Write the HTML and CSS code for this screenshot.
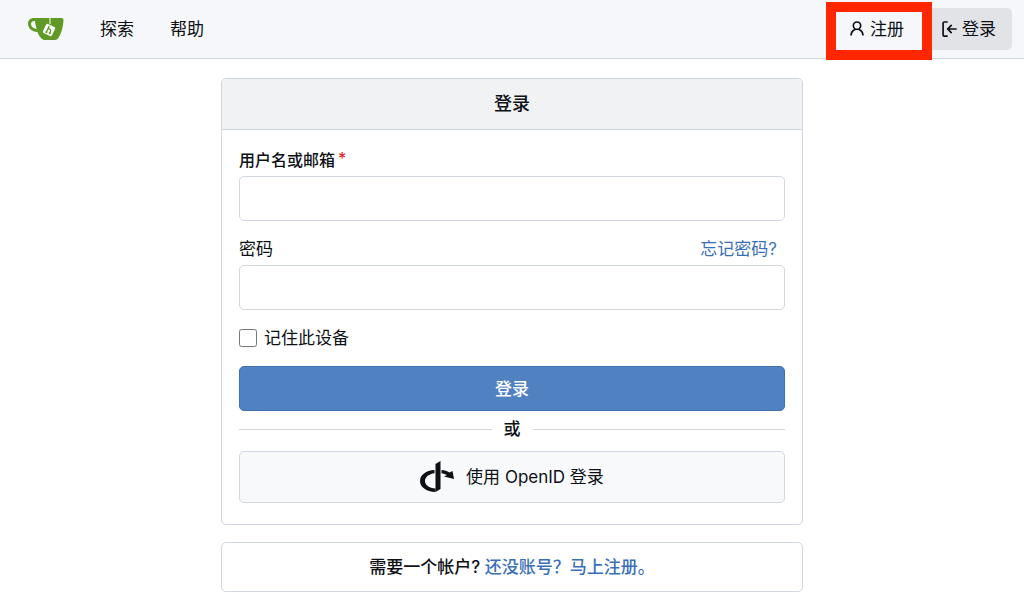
FILE: index.html
```html
<!DOCTYPE html>
<html lang="zh-CN">
  <head>
    <meta charset="UTF-8" />
    <meta name="viewport" content="width=device-width, initial-scale=1.0" />
    <title>登录</title>
    <link rel="stylesheet" href="styles.css">
  </head>
  <body>
    <nav class="navbar">
      <a class="logo" href="#" aria-label="Gitea">
        <svg width="36" height="24" viewBox="0 0 36 24">
          <path fill="#609926" fill-rule="evenodd" d="M6 1C2 1 0 3.500 0 6.500C0 11.500 4 14.500 9.500 15C10.500 18.500 13 21.500 15 22.500Q15.500 23 17 23H27Q28.500 23 29.500 22C33 18 35 11 35.500 3Q35.500 1 33.500 1ZM6.500 4H7C7.300 7 8 10 8.800 12C5 11.300 3 9.500 3 7C3 5 4.500 4 6.500 4Z" />
          <path fill="none" stroke="#fff" stroke-width="1" d="M22 1V7" />
          <rect x="16" y="8" width="10" height="10" rx="1.500" fill="#fff" transform="rotate(26 21 13)" />
          <g transform="rotate(26 21 13)" fill="none" stroke="#609926" stroke-width="1.300">
            <path d="M19.500 9V16M19.500 12H21.500Q23 12 23 13.500V16" />
          </g>
          <g transform="rotate(26 21 13)" fill="#609926">
            <circle cx="19.500" cy="16" r="1.100" />
            <circle cx="23" cy="15.500" r="1.100" />
          </g>
        </svg>
      </a>
      <a class="item" href="#">探索</a>
      <a class="item" href="#">帮助</a>
      <div class="navbar-right">
        <a class="item highlight" href="#">
          <svg width="18" height="18" viewBox="0 0 16 16" fill="currentColor">
            <path d="M10.561 8.073a6 6 0 0 1 3.432 5.142.75.75 0 1 1-1.498.07 4.500 4.500 0 0 0-8.990 0 .75.75 0 0 1-1.498-.07 6 6 0 0 1 3.431-5.142 3.999 3.999 0 1 1 5.123 0ZM10.500 5a2.500 2.500 0 1 0-5 0 2.500 2.500 0 0 0 5 0Z" />
          </svg>
          注册
        </a>
        <a class="item active" href="#">
          <svg width="18" height="18" viewBox="0 0 16 16" fill="currentColor">
            <path d="M2 2.750C2 1.784 2.784 1 3.750 1h2.500a.75.75 0 0 1 0 1.500h-2.500a.25.25 0 0 0-.25.250v10.500c0 .138.112.250.250.250h2.500a.75.75 0 0 1 0 1.500h-2.500A1.750 1.750 0 0 1 2 13.250Zm6.560 4.500h5.690a.75.75 0 0 1 0 1.500H8.560l1.970 1.970a.749.749 0 0 1-1.060 1.060L6.220 8.530a.75.75 0 0 1 0-1.060l3.250-3.250a.749.749 0 1 1 1.060 1.060L8.560 7.250Z" />
          </svg>
          登录
        </a>
      </div>
    </nav>

    <main class="container">
      <section class="card">
        <h4 class="card-header">登录</h4>
        <form class="card-body">
          <div class="field">
            <label class="required" for="user_name">用户名或邮箱</label>
            <input type="text" id="user_name" name="user_name" required />
          </div>
          <div class="field">
            <div class="field-row">
              <label for="password">密码</label>
              <a href="#">忘记密码?</a>
            </div>
            <input type="password" id="password" name="password" />
          </div>
          <div class="checkbox">
            <input type="checkbox" id="remember" name="remember" />
            <label for="remember">记住此设备</label>
          </div>
          <button type="submit" class="button primary">登录</button>
          <div class="divider">或</div>
          <button type="button" class="button openid">
            <svg width="34" height="32" viewBox="0 0 34 32" fill="currentColor">
              <path d="M15.500 3L20.500 0V28L15.500 31Z" />
              <path d="M14.500 9C6 9.500 0 14 0 20C0 26 6 30.500 15.500 31V27.500C9 27 5 24 5 20C5 16 9 13 14.500 12.300Z" />
              <path d="M21.500 9C24.500 9.300 27 10 29.500 11.500L32.500 10L34 18L24 15.500L27 14C25.500 13 23.500 12.500 21.500 12.200Z" />
            </svg>
            使用 OpenID 登录
          </button>
        </form>
      </section>

      <section class="card signup">
        需要一个帐户? <a href="#">还没账号？马上注册。</a>
      </section>
    </main>
  </body>
</html>
```

FILE: styles.css
```css
* {
  box-sizing: border-box;
}
body {
  margin: 0;
  background-color: #fff;
  color: #0d1015;
  font-family: Inter, "Noto Sans CJK SC", sans-serif;
  font-size: 17px;
  line-height: 24px;
}
a {
  color: #3a6fb8;
  text-decoration: none;
}
a:hover {
  text-decoration: underline;
}
.navbar {
  display: flex;
  align-items: center;
  gap: 4px;
  padding: 8px 12px;
  background-color: #f6f7fa;
  border-bottom: 1px solid #d0d7de;
}
.logo {
  display: flex;
  padding: 0 16px;
}
.navbar .item {
  display: flex;
  align-items: center;
  gap: 4px;
  padding: 9px 16px;
  border-radius: 5px;
  color: #0d1015;
}
.navbar-right {
  display: flex;
  gap: 4px;
  margin-left: auto;
}
.navbar .active {
  background-color: #e2e3e6;
}
.highlight {
  position: relative;
}
/* red frame round the register link */
.highlight::after {
  content: "";
  position: absolute;
  z-index: 1;
  inset: -6px -12px -10px -6px;
  border: 10px solid #ff2600;
}
.container {
  display: flex;
  flex-direction: column;
  gap: 17px;
  max-width: 582px;
  margin: 19px auto;
}
.card {
  border: 1px solid #d0d7de;
  border-radius: 5px;
}
.card-header {
  margin: 0;
  padding: 13px 17px;
  background-color: #f1f2f4;
  border-bottom: 1px solid #d0d7de;
  border-radius: 4px 4px 0 0;
  font-size: 18px;
  font-weight: 500;
  text-align: center;
}
.card-body {
  display: flex;
  flex-direction: column;
  padding: 16px 17px 21px;
}
.field {
  display: flex;
  flex-direction: column;
  gap: 4px;
  margin-bottom: 16px;
}
.field-row {
  display: flex;
  justify-content: space-between;
  padding-right: 8px;
}
.required {
  font-size: 16px;
  font-weight: 500;
}
.required::after {
  content: "*";
  margin-left: 3px;
  color: #db2828;
  vertical-align: 2px;
}
.field input {
  width: 100%;
  height: 45px;
  padding: 0 16px;
  border: 1px solid #d0d7de;
  border-radius: 5px;
  font: inherit;
}
.checkbox {
  display: flex;
  align-items: center;
  gap: 7px;
  margin-bottom: 16px;
}
.checkbox input {
  width: 18px;
  height: 18px;
  margin: 0;
}
.button {
  display: flex;
  align-items: center;
  justify-content: center;
  gap: 12px;
  min-height: 45px;
  padding: 9px 16px;
  border: 1px solid #d0d7de;
  border-radius: 5px;
  font: inherit;
  cursor: pointer;
}
.primary {
  background-color: #5081c0;
  border-color: #4070ae;
  color: #fff;
  font-weight: 500;
}
.divider {
  display: flex;
  align-items: center;
  gap: 12px;
  margin: 6px 0 10px;
  font-weight: 500;
}
.divider::before,
.divider::after {
  content: "";
  flex: 1;
  border-top: 1px solid #d0d7de;
}
.openid {
  background-color: #f8f9fb;
  color: #0d1015;
}
.signup {
  padding: 12px 17px;
  font-weight: 500;
  text-align: center;
}
```
